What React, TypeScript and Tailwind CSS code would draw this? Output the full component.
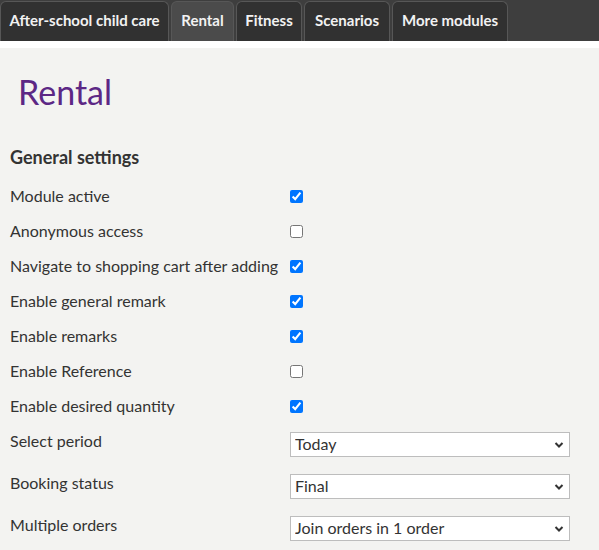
import React from "react";

const tabs = [
  { label: "After-school child care", w: "w-[169px]" },
  { label: "Rental", w: "w-[63px]", active: true },
  { label: "Fitness", w: "w-[66px]" },
  { label: "Scenarios", w: "w-[86px]" },
  { label: "More modules", w: "w-[116px]" },
];

const checks = [
  { label: "Module active", on: true },
  { label: "Anonymous access", on: false },
  { label: "Navigate to shopping cart after adding", on: true },
  { label: "Enable general remark", on: true },
  { label: "Enable remarks", on: true },
  { label: "Enable Reference", on: false },
  { label: "Enable desired quantity", on: true },
];

const selects = [
  { label: "Select period", value: "Today" },
  { label: "Booking status", value: "Final" },
  { label: "Multiple orders", value: "Join orders in 1 order" },
];

const Chevron = () => (
  <svg
    className="absolute right-[6px] top-1/2 -translate-y-1/2 pointer-events-none"
    width="10"
    height="7"
    viewBox="0 0 10 7"
  >
    <path d="M1.5 1.5 L5 5 L8.5 1.5" stroke="#333" strokeWidth="2" fill="none" />
  </svg>
);

export default function App() {
  return (
    <div
      className="w-[599px] h-[550px] overflow-hidden bg-[#f3f3f1] text-[#333]"
      style={{ fontFamily: "Lato, 'Open Sans', sans-serif" }}
    >
      <div className="h-[41px] bg-[#3e3e3e] flex items-end gap-[2px] pt-px">
        {tabs.map((t) => (
          <div
            key={t.label}
            className={`${t.w} h-[40px] flex items-center justify-center pb-[2px] rounded-t-[6px] border border-b-0 border-[#575757] text-[15px] font-bold text-[#f2f2f2] ${
              t.active ? "bg-[#4b4b4b]" : "bg-[#313131]"
            }`}
          >
            {t.label}
          </div>
        ))}
      </div>
      <div className="h-[7px] bg-white" />

      <div className="pl-[10px] pr-[29px]">
        <h1 className="ml-[8px] mt-[22px] text-[34px] leading-[44px] text-[#5c2785]">Rental</h1>
        <h2 className="mt-[32px] text-[18px] font-bold leading-[22px]">General settings</h2>

        <div className="mt-[11px]">
          {checks.map((c) => (
            <div key={c.label} className="h-[35px] flex items-center">
              <span className="w-[280px] text-[16px] leading-[20px] relative -top-px">{c.label}</span>
              <input
                type="checkbox"
                defaultChecked={c.on}
                className="m-0 w-[13px] h-[13px] accent-[#0075ff]"
              />
            </div>
          ))}
          {selects.map((s) => (
            <div key={s.label} className="h-[42px] flex items-start pt-[8px]">
              <span className="w-[280px] text-[16px] leading-[20px] -mt-[1px]">{s.label}</span>
              <div className="relative flex-1">
                <select
                  defaultValue={s.value}
                  className="appearance-none w-full h-[25px] border border-[#bdbdbd] bg-white px-[4px] pb-px text-[16px] leading-[20px] text-[#333] outline-none"
                >
                  <option>{s.value}</option>
                </select>
                <Chevron />
              </div>
            </div>
          ))}
        </div>
      </div>
    </div>
  );
}
